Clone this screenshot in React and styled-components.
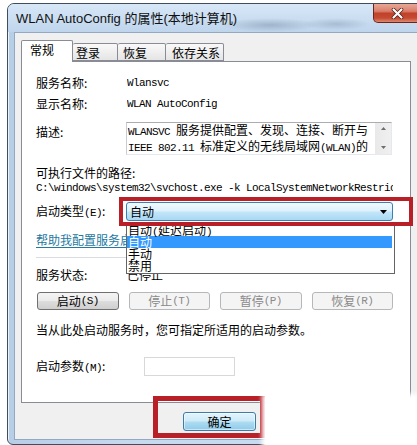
import React from "react";
import styled, { createGlobalStyle } from "styled-components";

const GlobalStyle = createGlobalStyle`
  html, body { margin: 0; padding: 0; background: #ffffff; overflow: hidden; }
  body { font-family: "Noto Sans CJK SC", "Noto Sans", sans-serif; color: #000; }
  #root { width: 417px; height: 445px; overflow: hidden; }
  * { box-sizing: border-box; }
`;

const Window = styled.div`
  position: relative;
  margin: 3px 0 0 7px;
  width: 421px;
  border: 1px solid #3f4d5e;
  border-radius: 7px 7px 0 6px;
  background: linear-gradient(to right, #b7cee7, #c6daef 30%, #c9ddf1);
  box-shadow: inset 1px 1px 0 rgba(255, 255, 255, 0.75);
`;

const TitleBar = styled.div`
  display: flex;
  justify-content: space-between;
  align-items: flex-start;
  height: 28px;
  padding-left: 8px;
  border-radius: 6px 6px 0 0;
  background:
    radial-gradient(48px 7px at 262px 21px, rgba(90, 112, 136, 0.35), rgba(90, 112, 136, 0)),
    radial-gradient(34px 6px at 328px 20px, rgba(90, 112, 136, 0.28), rgba(90, 112, 136, 0)),
    linear-gradient(#d7e7f7, #bfd5ec);
`;

const Title = styled.div`
  margin-top: 7px;
  font: 13px/16px "Liberation Sans", "Noto Sans CJK SC", sans-serif;
  color: #111;
  white-space: nowrap;
`;

const CloseButton = styled.div`
  display: flex;
  align-items: center;
  justify-content: center;
  width: 48px;
  height: 19px;
  margin-right: 6px;
  border: 1px solid #6e2519;
  border-top: none;
  border-radius: 0 0 5px 5px;
  background: linear-gradient(#e9a796 0%, #d8806b 40%, #c2412a 52%, #c64a33 78%, #dd8a70 100%);
`;

const FrameBody = styled.div`
  padding: 0 6px 4px 6px;
`;

const Client = styled.div`
  border: 1px solid #94a9c1;
  background: #f0f0f0;
  padding: 7px 0 8px 6px;
`;

const TabStrip = styled.div`
  display: flex;
  align-items: flex-end;
  height: 21px;
  position: relative;
  z-index: 1;
`;

const Tab = styled.div`
  width: ${(p) => p.$w}px;
  height: ${(p) => (p.$active ? 22 : 18)}px;
  margin-bottom: ${(p) => (p.$active ? -1 : 0)}px;
  padding: 2px 0 0 ${(p) => p.$pad}px;
  border: 1px solid #898c95;
  border-left: ${(p) => (p.$first ? "1px solid #898c95" : "none")};
  border-bottom: ${(p) => (p.$active ? "none" : "1px solid #898c95")};
  border-radius: 2px 2px 0 0;
  background: ${(p) => (p.$active ? "#ffffff" : "linear-gradient(#f9f9f9, #e5e5e5)")};
  font-size: 12px;
  line-height: 14px;
  white-space: nowrap;
`;

const Panel = styled.div`
  width: 390px;
  border: 1px solid #898c95;
  background: #ffffff;
  padding: 14px 17px 26px 14px;
  display: flex;
  flex-direction: column;
`;

const Row = styled.div`
  position: relative;
  z-index: ${(p) => p.$z || "auto"};
  display: flex;
  align-items: ${(p) => p.$align || "center"};
  height: ${(p) => p.$h || 14}px;
  margin-top: ${(p) => p.$mt || 0}px;
  font-size: 12px;
  line-height: 14px;
  white-space: nowrap;
`;

const Label = styled.div`
  flex: none;
  width: ${(p) => p.$w || 91}px;
  padding-top: ${(p) => p.$pt || 0}px;
`;

const Mono = styled.span`
  font-family: "Liberation Mono", monospace;
  font-size: 11px;
  letter-spacing: -0.6px;
`;

const Value = styled.div`
  font: 11px/14px "Liberation Mono", monospace;
  letter-spacing: -0.6px;
  white-space: nowrap;
  overflow: hidden;
  width: ${(p) => (p.$w ? `${p.$w}px` : "auto")};
`;

const DescBox = styled.div`
  display: flex;
  width: 266px;
  height: 33px;
  border: 1px solid;
  border-color: #abadb3 #e3e9ef #e3e9ef #c9ccd3;
  background: #ffffff;
`;

const DescText = styled.div`
  flex: 1;
  padding: 0 0 0 1px;
  overflow: hidden;
  font-size: 12px;
  line-height: 14px;
`;

const Scroll = styled.div`
  flex: none;
  width: 16px;
  display: flex;
  flex-direction: column;
  justify-content: space-between;
  align-items: center;
  padding: 4px 0 5px;
  background: linear-gradient(to right, #e9e9e9, #f0f0f0);
`;

const Rule = styled.div`
  height: 1px;
  margin-top: ${(p) => p.$mt}px;
  background: #d9dde2;
`;

const ComboWrap = styled.div`
  position: relative;
  width: 267px;
  height: 19px;
`;

const Combo = styled.div`
  display: flex;
  align-items: center;
  justify-content: space-between;
  height: 19px;
  padding: 0 5px 0 3px;
  border: 1px solid #3c7fb1;
  border-radius: 3px;
  background: linear-gradient(#f1f9fe 0%, #ddf1fc 48%, #c3e6f9 52%, #a9d8f3 100%);
  font-size: 12px;
  line-height: 14px;
`;

const DropList = styled.div`
  position: absolute;
  left: 0;
  top: 21px;
  width: 269px;
  border: 1px solid #646464;
  background: #ffffff;
  padding: 0 2px 1px 0;
  z-index: 2;
`;

const DropItem = styled.div`
  height: 12px;
  padding-left: 1px;
  font-size: 12px;
  line-height: 12px;
  color: ${(p) => (p.$sel ? "#ffffff" : "#000000")};
  background: ${(p) => (p.$sel ? "#3399ff" : "transparent")};
`;

const Annotation = styled.div`
  position: absolute;
  top: ${(p) => p.$t}px;
  left: ${(p) => p.$l}px;
  right: ${(p) => p.$r}px;
  bottom: ${(p) => p.$b}px;
  border: ${(p) => p.$bw}px solid #b81f27;
  z-index: 3;
  pointer-events: none;
`;

const Link = styled.span`
  color: #23799f;
  text-decoration: underline;
  text-underline-offset: 2px;
`;

const ButtonGrid = styled.div`
  display: grid;
  grid-template-columns: repeat(4, 1fr);
  column-gap: 10px;
  width: 356px;
  height: 18px;
  margin: ${(p) => p.$mt}px 0 0 1px;
`;

const Button = styled.div`
  display: flex;
  align-items: center;
  justify-content: center;
  height: 18px;
  border: 1px solid ${(p) => (p.$disabled ? "#b4b8bb" : "#707070")};
  border-radius: 3px;
  background: ${(p) =>
    p.$disabled
      ? "#f4f4f4"
      : "linear-gradient(#f4f4f4 0%, #ebebeb 48%, #dddddd 52%, #cfcfcf 100%)"};
  color: ${(p) => (p.$disabled ? "#8a8a8a" : "#000000")};
  font-size: 12px;
  line-height: 14px;
`;

const ParamInput = styled.div`
  width: 91px;
  height: 19px;
  border: 1px solid #d8d8d8;
  background: #ffffff;
`;

const Footer = styled.div`
  display: flex;
  margin-top: 9px;
  padding-left: 162px;
`;

const OkWrap = styled.div`
  position: relative;
`;

const OkButton = styled.div`
  display: flex;
  align-items: center;
  justify-content: center;
  width: 73px;
  height: 19px;
  border: 1px solid #3d7ca6;
  border-radius: 3px;
  background: linear-gradient(#e4f4fc 0%, #cdebf8 48%, #aedcf2 52%, #8fcbea 100%);
  box-shadow: inset 0 0 0 1px rgba(255, 255, 255, 0.5);
  font-size: 12px;
  line-height: 14px;
`;

const Smudge = styled.div`
  position: absolute;
  left: 254px;
  top: 390px;
  right: -10px;
  bottom: -12px;
  background: #ffffff;
  filter: blur(2px);
  z-index: 5;
`;

const tabs = [
  { label: "常规", w: 52, pad: 8, active: true },
  { label: "登录", w: 45, pad: 3 },
  { label: "恢复", w: 48, pad: 5 },
  { label: "依存关系", w: 58, pad: 6 },
];

const CloseX = () => (
  <svg width="13" height="11" viewBox="0 0 13 11">
    <path d="M2.5 1.5 L10.5 9.5 M10.5 1.5 L2.5 9.5" stroke="#4a1a12" strokeWidth="3.6" strokeLinecap="round" />
    <path d="M2.5 1.5 L10.5 9.5 M10.5 1.5 L2.5 9.5" stroke="#ffffff" strokeWidth="2.2" strokeLinecap="round" />
  </svg>
);

const ArrowDown = ({ color = "#000", w = 7, h = 4 }) => (
  <svg width={w} height={h} viewBox="0 0 7 4">
    <path d="M0 0 L7 0 L3.5 4 Z" fill={color} />
  </svg>
);

const ArrowUp = ({ color = "#000", w = 7, h = 4 }) => (
  <svg width={w} height={h} viewBox="0 0 7 4">
    <path d="M0 4 L7 4 L3.5 0 Z" fill={color} />
  </svg>
);

export default function App() {
  return (
    <>
      <GlobalStyle />
      <Window>
        <TitleBar>
          <Title>WLAN AutoConfig 的属性(本地计算机)</Title>
          <CloseButton>
            <CloseX />
          </CloseButton>
        </TitleBar>
        <FrameBody>
          <Client>
            <TabStrip>
              {tabs.map((t, i) => (
                <Tab key={t.label} $w={t.w} $pad={t.pad} $active={t.active} $first={i === 0}>
                  {t.label}
                </Tab>
              ))}
            </TabStrip>
            <Panel>
              <Row>
                <Label>服务名称:</Label>
                <Value>Wlansvc</Value>
              </Row>
              <Row $mt={7}>
                <Label>显示名称:</Label>
                <Value>WLAN AutoConfig</Value>
              </Row>
              <Row $mt={11} $h={33} $align="flex-start">
                <Label $w={90} $pt={3}>描述:</Label>
                <DescBox>
                  <DescText>
                    <div>
                      <Mono>WLANSVC </Mono>服务提供配置、发现、连接、断开与
                    </div>
                    <div>
                      <Mono>IEEE 802.11 </Mono>标准定义的无线局域网<Mono>(WLAN)</Mono>的
                    </div>
                  </DescText>
                  <Scroll>
                    <ArrowUp color="#6d6d6d" w={5} h={3} />
                    <ArrowDown color="#6d6d6d" w={5} h={3} />
                  </Scroll>
                </DescBox>
              </Row>
              <Row $mt={11}>可执行文件的路径:</Row>
              <Row $mt={1}>
                <Value $w={357}>C:\windows\system32\svchost.exe -k LocalSystemNetworkRestricted</Value>
              </Row>
              <Row $mt={7} $h={19} $z={3}>
                <Label $w={90}>
                  启动类型<Mono>(E)</Mono>:
                </Label>
                <ComboWrap>
                  <Combo>
                    <span>自动</span>
                    <ArrowDown />
                  </Combo>
                  <DropList>
                    <DropItem>
                      自动<Mono>(</Mono>延迟启动<Mono>)</Mono>
                    </DropItem>
                    <DropItem $sel>自动</DropItem>
                    <DropItem>手动</DropItem>
                    <DropItem>禁用</DropItem>
                  </DropList>
                  <Annotation $t={-5} $l={-7} $r={-20} $b={-5} $bw={4} />
                </ComboWrap>
              </Row>
              <Row $mt={12}>
                <Link>帮助我配置服务启动选项。</Link>
              </Row>
              <Rule $mt={10} />
              <Row $mt={10}>
                <Label>服务状态:</Label>
                <span>已停止</span>
              </Row>
              <ButtonGrid $mt={10}>
                <Button>
                  启动<Mono>(S)</Mono>
                </Button>
                <Button $disabled>
                  停止<Mono>(T)</Mono>
                </Button>
                <Button $disabled>
                  暂停<Mono>(P)</Mono>
                </Button>
                <Button $disabled>
                  恢复<Mono>(R)</Mono>
                </Button>
              </ButtonGrid>
              <Row $mt={13}>当从此处启动服务时，您可指定所适用的启动参数。</Row>
              <Row $mt={20} $h={19}>
                <Label $w={108}>
                  启动参数<Mono>(M)</Mono>:
                </Label>
                <ParamInput />
              </Row>
            </Panel>
            <Footer>
              <OkWrap>
                <OkButton>确定</OkButton>
                <Annotation $t={-16} $l={-30} $r={-9} $b={-7} $bw={5} />
              </OkWrap>
            </Footer>
          </Client>
        </FrameBody>
        <Smudge />
      </Window>
    </>
  );
}
